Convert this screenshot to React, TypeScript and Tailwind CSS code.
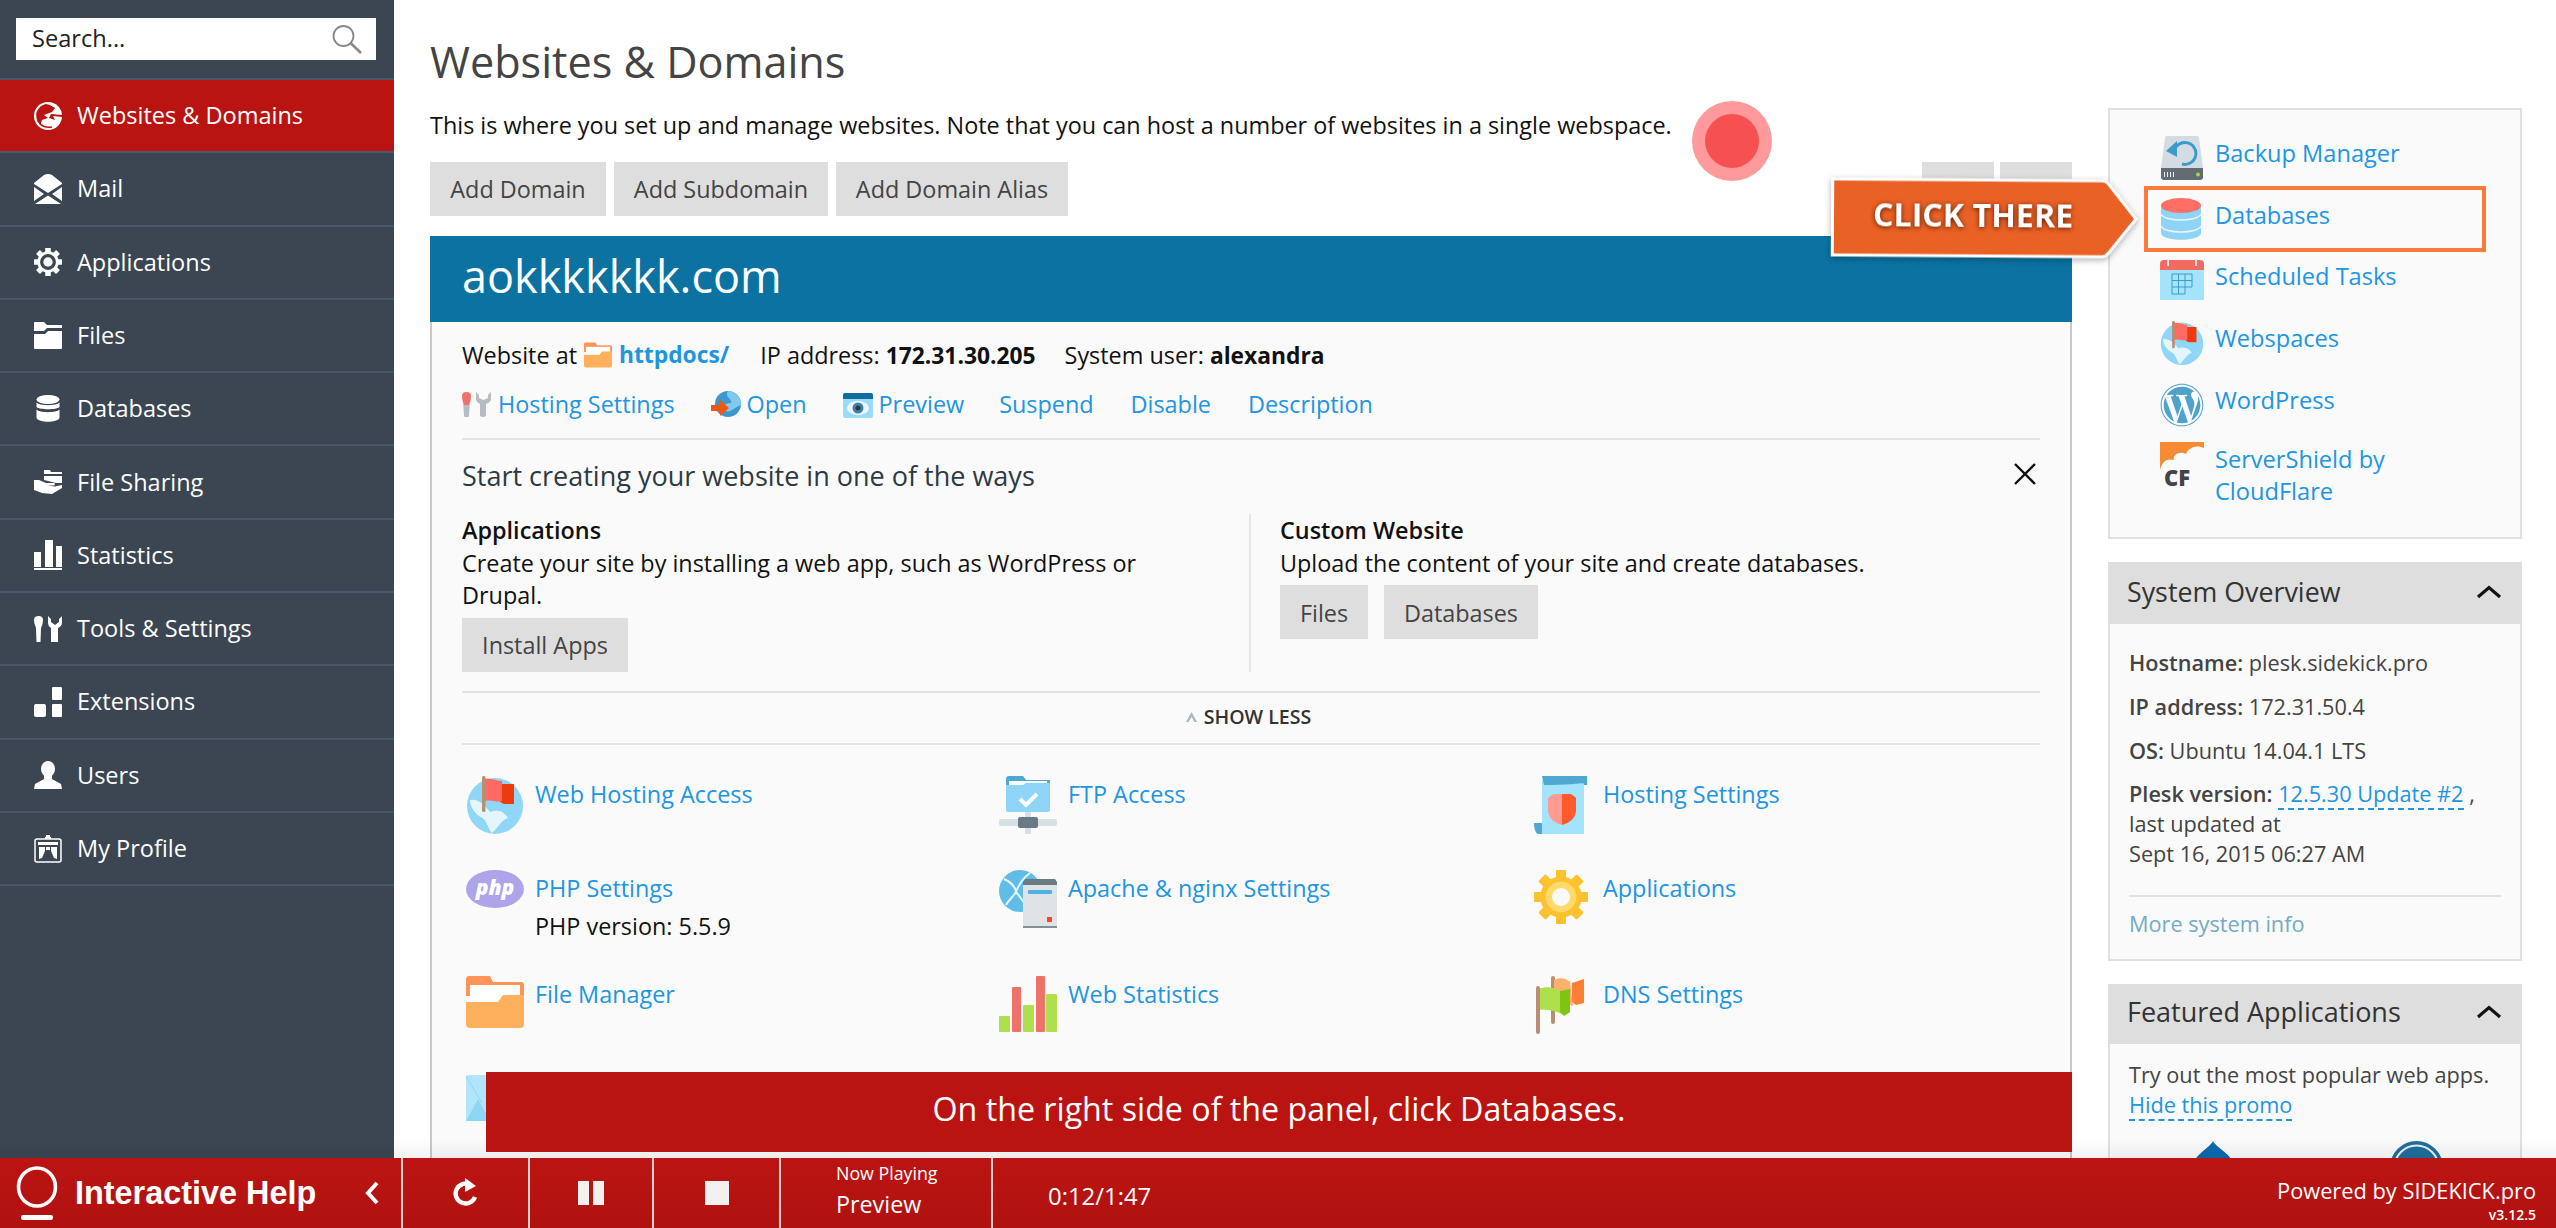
import React from "react";
import { FaWordpress } from "react-icons/fa";

const Gear = ({ size, c, ring, hole, inner }: { size: number; c: string; ring: string; hole: string; inner?: number }) => (
  <svg width={size} height={size} viewBox="0 0 60 60" className="block shrink-0">
    {[0, 45, 90, 135, 180, 225, 270, 315].map((a) => (
      <rect key={a} x="24.5" y="0" width="11" height="60" fill={c} rx="1" transform={`rotate(${a} 30 30)`} />
    ))}
    <circle cx="30" cy="30" r="23" fill={c} />
    <circle cx="30" cy="30" r={inner ?? 17} fill={ring} />
    <circle cx="30" cy="30" r="10" fill={hole} />
  </svg>
);

const NavIcons: Record<string, React.ReactNode> = {
  globe: (
    <svg width="28" height="28" viewBox="0 0 28 28" className="block">
      <circle cx="14" cy="14" r="14" fill="#fff" />
      <path d="M12 2 C7 3 3 7 2.2 12 C2 17 3.5 21 6 24 L8 18 L14 16 L10 13 L18 10 L21 6 L16 3Z" fill="#b91412" />
      <path d="M4 20 C7 25 13 27 19 25 L20 27 L10 27 L4 23Z" fill="#fff" />
      <path d="M5 19 C6 24 12 26 18 25" stroke="#b91412" strokeWidth="1.6" fill="none" />
      <path d="M17 12 L28 13 L28 15 L19 14 L21 18 L15 16Z" fill="#b91412" />
    </svg>
  ),
  mail: (
    <svg width="28" height="30" viewBox="0 0 28 30" className="block" fill="#fff">
      <path d="M10 1 Q14 -1 18 1 L28 9 V10 L14 19 L0 10 V9Z" />
      <path d="M0 13 L10 20 L0 27Z M28 13 L18 20 L28 27Z M1 30 L14 21.5 L27 30Z" />
    </svg>
  ),
  gear: <Gear size={28} c="#fff" ring="#3b4652" hole="#fff" />,
  folder: (
    <svg width="28" height="27" viewBox="0 0 28 27" className="block" fill="#fff">
      <path d="M0 1 Q0 0 1 0 H10 L13 3 H28 V6 H13 L10 9 H0Z" />
      <path d="M0 12 H11 L14 9 H28 V26 Q28 27 27 27 H1 Q0 27 0 26Z" />
    </svg>
  ),
  db: (
    <svg width="28" height="27" viewBox="0 0 28 27" className="block" fill="#fff">
      <ellipse cx="14" cy="4.5" rx="11.5" ry="4.5" />
      <path d="M2.5 7.5 C5 11 23 11 25.5 7.5 V12 C23 15 5 15 2.5 12Z" />
      <path d="M2.5 14.5 C5 18 23 18 25.5 14.5 V23 C23 28 5 28 2.5 23Z" />
    </svg>
  ),
  share: (
    <svg width="28" height="24" viewBox="0 0 28 24" className="block" fill="#fff">
      <path d="M10 0 H16 L17 2 H28 V4 H10Z" />
      <path d="M10 6 H28 V13 H22 L10 10Z" />
      <path d="M0 10 H5 L12 13 H20 Q22 14 20 15.5 H13 L21 16.5 L28 15 V18 L18 24 L8 23 L0 20Z" />
    </svg>
  ),
  stats: (
    <svg width="28" height="30" viewBox="0 0 28 30" className="block" fill="#fff">
      <rect x="0" y="12" width="7" height="15" />
      <rect x="11" y="0" width="8" height="27" />
      <rect x="22" y="6" width="6" height="21" />
      <rect x="0" y="28" width="28" height="2" />
    </svg>
  ),
  tools: (
    <svg width="28" height="26" viewBox="0 0 28 26" className="block" fill="#fff">
      <path d="M0 4 Q0 0 4.5 0 Q9 0 9 4 Q9 8 7 12 L6.5 26 H2.5 L2 12 Q0 8 0 4Z" />
      <path d="M14 0 V7 Q14 10 17 12 V26 H24 V12 Q28 10 28 7 V0 L25 3 V6 L21 9 L17 6 V3Z" />
    </svg>
  ),
  ext: (
    <svg width="28" height="30" viewBox="0 0 28 30" className="block" fill="#fff">
      <rect x="18" y="0" width="10" height="13" rx="1" />
      <rect x="0" y="17" width="12" height="13" rx="2" />
      <rect x="18" y="17" width="10" height="13" rx="1" />
    </svg>
  ),
  user: (
    <svg width="28" height="28" viewBox="0 0 28 28" className="block" fill="#fff">
      <ellipse cx="14" cy="8" rx="7" ry="8" />
      <path d="M10 14 H18 V18 L27 23 L28 28 H0 L1 23 L10 18Z" />
    </svg>
  ),
  profile: (
    <svg width="28" height="28" viewBox="0 0 28 28" className="block">
      <rect x="1" y="4" width="26" height="23" rx="2" stroke="#fff" strokeWidth="1.5" fill="none" />
      <path d="M11 2 H12 V0 H16 V2 H17 V4 H11Z M4 7 H24 V10 H4Z" fill="#fff" />
      <path d="M5 24 V12 H11 V16 L8 23 Z M23 24 V12 H17 V16 L20 23Z M12 12 H16 V15 H12Z" fill="#fff" />
    </svg>
  ),
};

const Backup = () => (
  <svg width="44" height="44" viewBox="0 0 44 44" className="block">
    <path d="M5 2 Q5 0 7 0 H37 Q39 0 39 2 L43 32 H1Z" fill="#d3dce2" />
    <path d="M1 32 H43 V41 Q43 44 40 44 H4 Q1 44 1 41Z" fill="#626c72" />
    <path d="M4 36 h1v5h-1z M7 36 h1v5h-1z M10 36 h1v5h-1z M13 36 h1v5h-1z" fill="#e8eef1" />
    <circle cx="38" cy="38.5" r="2" fill="#a5d64a" />
    <path d="M16 11 A11 11 0 1 1 22 28" stroke="#3b9ccb" strokeWidth="3" fill="none" />
    <path d="M6 15 L17 5 L17 21Z" fill="#3b9ccb" />
  </svg>
);
const Database = () => (
  <svg width="42" height="42" viewBox="0 0 42 42" className="block">
    <path d="M1 7 H41 V35 C41 44 1 44 1 35Z" fill="#8fd4f6" />
    <path d="M1 16 C4 24 38 24 41 16 M1 28 C4 36 38 36 41 28" stroke="#e8f7fe" strokeWidth="1.4" fill="none" />
    <ellipse cx="21" cy="7.5" rx="20" ry="7.5" fill="#ff6f66" />
  </svg>
);
const Calendar = () => (
  <svg width="44" height="41" viewBox="0 0 44 41" className="block">
    <rect x="0" y="7" width="44" height="34" fill="#a4e3fc" />
    <path d="M0 5 Q0 1 4 1 H40 Q44 1 44 5 V11 H0Z" fill="#f26a60" />
    <rect x="7" y="0" width="2" height="7" fill="#e8e8e8" />
    <rect x="35" y="0" width="2" height="7" fill="#e8e8e8" />
    <path d="M12 15 H32 V28 H25 V35 H12Z M12 21.5 H32 M12 28 H25 M18.5 15 V35 M25 15 V28" stroke="#3f9ccb" strokeWidth="1" fill="none" />
  </svg>
);
const GlobeFlag = ({ w, h }: { w: number; h: number }) => (
  <svg width={w} height={h} viewBox="0 0 58 58" className="block">
    <circle cx="29" cy="30" r="28" fill="#8fd6f7" />
    <path d="M4 24 C12 22 20 30 24 36 C33 33 38 36 42 42 C35 44 32 52 26 57 C20 50 22 44 13 40 C8 36 4 30 4 24Z" fill="#e4f5fe" />
    <path d="M34 8 H48 V28 H38 L34 26Z" fill="#ee3a0c" />
    <path d="M16 3 C24 1 30 5 36 5 V25 C30 27 24 22 16 26Z" fill="#ff6b61" />
    <rect x="16" y="0" width="3.5" height="36" rx="1.5" fill="#b98f72" />
  </svg>
);
const CF = () => (
  <svg width="44" height="50" viewBox="0 0 44 50" className="block">
    <path d="M0 0 H44 V6 C36 2 28 6 26 12 C18 8 12 14 14 18 C6 16 2 20 0 28Z" fill="#f68b34" />
    <text x="4" y="44" fontFamily="'Open Sans',sans-serif" fontWeight="800" fontSize="22" fill="#444">CF</text>
  </svg>
);
const OrangeFolder = ({ w, h }: { w: number; h: number }) => (
  <svg width={w} height={h} viewBox="0 0 58 52" className="block">
    <path d="M0 3 Q0 0 3 0 H24 L27 6 H55 Q58 6 58 9 V20 H0Z" fill="#ff9457" />
    <path d="M4 9 H54 V24 H4Z" fill="#fff" />
    <path d="M0 26 H32 L37 19 H55 Q58 19 58 22 V48 Q58 52 54 52 H4 Q0 52 0 48Z" fill="#ffb05c" />
  </svg>
);
const Php = () => (
  <svg width="58" height="38" viewBox="0 0 58 38" className="block">
    <ellipse cx="29" cy="19" rx="29" ry="19" fill="#ada4ea" />
    <text x="29" y="25" textAnchor="middle" fontFamily="'Open Sans',sans-serif" fontWeight="800" fontStyle="italic" fontSize="21" fill="#fff">php</text>
  </svg>
);
const Ftp = () => (
  <svg width="58" height="58" viewBox="0 0 58 58" className="block">
    <rect x="26" y="36" width="6" height="22" rx="1" fill="#d6dfe4" />
    <rect x="0" y="43" width="58" height="7" rx="2" fill="#d6dfe4" />
    <rect x="19" y="41" width="20" height="11" rx="2" fill="#6a7a84" />
    <path d="M7 3 Q7 0 10 0 H24 L27 4 H51 V12 H7Z" fill="#4fa8d2" />
    <rect x="10" y="5" width="38" height="5" fill="#fff" />
    <path d="M7 9 H24 L27 7 H51 V34 Q51 36 49 36 H9 Q7 36 7 34Z" fill="#8ed4f6" />
    <path d="M21 23 L27 29 L38 18" stroke="#fff" strokeWidth="4" fill="none" />
  </svg>
);
const Apache = () => (
  <svg width="58" height="58" viewBox="0 0 58 58" className="block">
    <circle cx="21" cy="21" r="21" fill="#5fbde8" />
    <path d="M5 9 C12 12 16 16 17 22 C14 27 9 31 7 35 M17 22 C20 14 24 8 31 3 M17 22 C22 28 26 34 30 40" stroke="#e6f6fd" strokeWidth="2" fill="none" />
    <path d="M24 12 L26 9 H56 L58 12 V16 H24Z" fill="#6a7a84" />
    <rect x="24" y="15" width="34" height="41" fill="#dfe3e6" />
    <rect x="24" y="56" width="34" height="2" fill="#848f96" />
    <rect x="29" y="20" width="24" height="4" rx="1" fill="#4fb2e3" />
    <rect x="48" y="47" width="5" height="5" fill="#f6472a" />
  </svg>
);
const Scroll = () => (
  <svg width="53" height="58" viewBox="0 0 53 58" className="block">
    <rect x="8" y="4" width="42" height="54" fill="#a3e3fc" />
    <path d="M8 0 H53 V9 H50 C50 5 48 9 10 9Z" fill="#4fa8d2" />
    <path d="M0 47 H8 V58 H4 Q0 56 0 47Z" fill="#4fa8d2" />
    <path d="M28 18 H20 Q16 20 14 22 V36 Q16 46 28 49Z" fill="#ff9b90" />
    <path d="M28 18 H37 Q40 20 42 22 V36 Q40 46 28 49Z" fill="#ff5a2b" />
  </svg>
);
const Chart = () => (
  <svg width="58" height="56" viewBox="0 0 58 56" className="block">
    <rect x="0" y="40" width="11" height="16" rx="1" fill="#aee04e" />
    <rect x="13" y="11" width="9" height="45" rx="1" fill="#ef7268" />
    <rect x="24" y="29" width="11" height="27" rx="1" fill="#aee04e" />
    <rect x="37" y="0" width="9" height="56" rx="1" fill="#ef7268" />
    <rect x="47" y="18" width="11" height="38" rx="1" fill="#aee04e" />
  </svg>
);
const Flags = () => (
  <svg width="52" height="58" viewBox="0 0 52 58" className="block">
    <rect x="17" y="0" width="4" height="48" rx="2" fill="#b98f72" />
    <path d="M20 4 C26 1 32 2 36 6 L39 30 C34 28 26 26 20 26Z" fill="#ffb06a" />
    <path d="M38 7 L50 3 V27 L42 29 L38 26Z" fill="#ff7e36" />
    <path d="M4 13 C12 10 20 11 26 15 L28 38 C20 34 12 33 4 34Z" fill="#aee04e" />
    <path d="M26 15 L36 13 V36 L30 40 L26 36Z" fill="#7dc414" />
    <rect x="2" y="10" width="4" height="48" rx="2" fill="#b98f72" />
  </svg>
);
const MailColor = () => (
  <svg width="58" height="46" viewBox="0 0 58 46" className="block">
    <rect width="58" height="46" rx="2" fill="#b0e5fb" />
    <path d="M0 46 L12 24 L24 46Z" fill="#8fd6f6" />
    <path d="M0 1 L16 28" stroke="#8fd6f6" strokeWidth="1" />
  </svg>
);
const Wrench = () => (
  <svg width="30" height="26" viewBox="0 0 30 26" className="block">
    <path d="M0 4 Q0 0 4.5 0 Q9 0 9 4 Q9 8 7.5 12 L7 24 Q4.5 26 2 24 L1.5 12 Q0 8 0 4Z" fill="#f0726a" />
    <path d="M2 13 H7 L7 24 Q4.5 26 2 24Z" fill="#b5bcc2" />
    <path d="M14 0 V7 Q14 10 18 12 V24 Q21 26 24 24 V12 Q29 10 29 7 V0 L26 3 V6 L21.5 8 L17 6 V3Z" fill="#b5bcc2" />
  </svg>
);
const OpenGlobe = () => (
  <svg width="30" height="28" viewBox="0 0 30 28" className="block">
    <circle cx="17" cy="13" r="13" fill="#3d96cc" />
    <path d="M17 0 C13 6 22 8 20 12 C15 12 10 14 14 20 C20 22 24 16 30 14 C30 6 24 0 17 0Z" fill="#7fc8ee" />
    <path d="M0 14 H9 V9 L18 17 L9 25 V20 H0Z" fill="#f2570f" />
  </svg>
);
const PreviewIcon = () => (
  <svg width="30" height="25" viewBox="0 0 30 25" className="block">
    <rect width="30" height="25" rx="2" fill="#9adcf8" />
    <path d="M0 2 Q0 0 2 0 H28 Q30 0 30 2 V6 H0Z" fill="#0f6d9f" />
    <ellipse cx="15" cy="15" rx="11" ry="7" fill="#e9f7fd" />
    <circle cx="15" cy="15" r="5.5" fill="#4a7f9e" />
    <circle cx="15" cy="15" r="2.5" fill="#1c3f55" />
  </svg>
);

const Chevron = () => (
  <svg width="26" height="14" viewBox="0 0 26 14" className="block">
    <path d="M2 12 L13 2.5 L24 12" stroke="#111" strokeWidth="3.2" fill="none" />
  </svg>
);

const nav: [string, string, boolean?][] = [
  ["Websites & Domains", "globe", true],
  ["Mail", "mail"],
  ["Applications", "gear"],
  ["Files", "folder"],
  ["Databases", "db"],
  ["File Sharing", "share"],
  ["Statistics", "stats"],
  ["Tools & Settings", "tools"],
  ["Extensions", "ext"],
  ["Users", "user"],
  ["My Profile", "profile"],
];

const Btn = ({ children, className = "" }: { children?: React.ReactNode; className?: string }) => (
  <div className={`flex h-[54px] items-center justify-center bg-[#dedede] pt-[2px] text-[23.4px] text-[#444] ${className}`}>{children}</div>
);

const Link = ({ children, className = "" }: { children: React.ReactNode; className?: string }) => (
  <a className={`text-[#2095e2] ${className}`}>{children}</a>
);

const Tool = ({ icon, label, sub, h }: { icon: React.ReactNode; label: string; sub?: string; h: number }) => (
  <div className="flex items-start" style={{ height: h }}>
    <div className="w-[73px] shrink-0 pl-1">{icon}</div>
    <div className="pt-[3px] leading-[30px]">
      <Link className="block text-[23.4px]">{label}</Link>
      {sub && <div className="mt-[8px] text-[23.4px] text-[#111]">{sub}</div>}
    </div>
  </div>
);

const Side = ({ icon, children, h }: { icon: React.ReactNode; children: React.ReactNode; h: string }) => (
  <div className={`flex items-start ${h}`}>
    <div className="w-[55px] shrink-0 pt-[2px]">{icon}</div>
    <div className="pt-[3px] text-[23.6px] leading-[32px] text-[#2095e2]">{children}</div>
  </div>
);

export default function App() {
  return (
    <div className="relative flex h-[1228px] w-[2556px] flex-col overflow-hidden bg-white font-['Open_Sans',sans-serif] text-[23.4px] text-[#111]">
      <div className="flex min-h-0 flex-1">
        <aside className="w-[394px] shrink-0 bg-[#3b4652] text-white">
          <div className="h-[78px] pl-4 pr-[18px] pt-[18px]">
            <div className="flex h-[42px] items-center justify-between bg-white pl-[16px] pr-[14px] text-[23.6px] text-[#222]">
              <span>Search...</span>
              <svg width="30" height="29" viewBox="0 0 30 29" className="block">
                <circle cx="11.5" cy="11" r="10" stroke="#888" strokeWidth="1.8" fill="none" />
                <path d="M18.5 18 L29 28" stroke="#888" strokeWidth="2.6" />
              </svg>
            </div>
          </div>
          <div className="border-t-2 border-[#46586a]">
            {nav.map(([label, ic, active]) => (
              <div key={label} className={`flex h-[73.3px] items-center border-b-2 border-[#46586a] pl-[34px] text-[23.5px] ${active ? "bg-[#b91412]" : ""}`}>
                <div className="w-[43px] shrink-0">{NavIcons[ic]}</div>
                <span>{label}</span>
              </div>
            ))}
          </div>
        </aside>

        <main className="ml-9 w-[1642px] shrink-0">
          <h1 className="mt-9 h-[52px] text-[43.2px] font-normal leading-[52px] text-[#444]">Websites &amp; Domains</h1>
          <p className="mt-[22px] h-[30px] leading-[30px]">This is where you set up and manage websites. Note that you can host a number of websites in a single webspace.</p>
          <div className="mt-[22px] flex justify-between">
            <div className="flex gap-2">
              <Btn className="w-[176px]">Add Domain</Btn>
              <Btn className="w-[214px]">Add Subdomain</Btn>
              <Btn className="w-[232px]">Add Domain Alias</Btn>
            </div>
            <div className="flex gap-[6px]">
              <Btn className="w-[72px]" />
              <Btn className="w-[72px]" />
            </div>
          </div>
          <div className="mt-5 flex h-[86px] items-center bg-[#0b72a2] pb-[6px] pl-[32px] text-[45px] text-white">aokkkkkkk.com</div>
          <section className="h-[900px] border-x-2 border-[#c8c8c8] bg-[#fafafa] px-[30px] pt-[18px]">
            <div className="flex h-[30px] items-center leading-[30px]">
              <span>Website at</span>
              <span className="mx-[7px]"><OrangeFolder w={28} h={26} /></span>
              <Link className="font-bold text-[22.8px]">httpdocs/</Link>
              <span className="ml-[31px]">IP address: <b className="text-[22.8px]">172.31.30.205</b></span>
              <span className="ml-[29px]">System user: <b className="text-[22.8px]">alexandra</b></span>
            </div>
            <div className="mt-5 flex h-[30px] items-center text-[23.4px]">
              <Wrench />
              <Link className="ml-[6px]">Hosting Settings</Link>
              <span className="ml-[36px]"><OpenGlobe /></span>
              <Link className="ml-[6px]">Open</Link>
              <span className="ml-[36px]"><PreviewIcon /></span>
              <Link className="ml-[6px]">Preview</Link>
              <Link className="ml-[35px]">Suspend</Link>
              <Link className="ml-[37px]">Disable</Link>
              <Link className="ml-[37px]">Description</Link>
            </div>
            <div className="mt-[18px] h-[2px] bg-[#e3e3e3]" />
            <div className="mt-[18px] flex h-9 items-center justify-between text-[27px] text-[#2d3a44]">
              <span>Start creating your website in one of the ways</span>
              <svg width="22" height="22" viewBox="0 0 22 22" className="mb-[4px] mr-[4px] block">
                <path d="M1 1 L21 21 M21 1 L1 21" stroke="#111" strokeWidth="2.4" />
              </svg>
            </div>
            <div className="mt-5 flex h-[158px]">
              <div className="w-[787px] shrink-0 pr-[30px] leading-[32.5px]">
                <div className="font-semibold">Applications</div>
                <div>Create your site by installing a web app, such as WordPress or Drupal.</div>
                <Btn className="mt-[6px] w-[166px]">Install Apps</Btn>
              </div>
              <div className="flex-1 border-l-2 border-[#e6e6e6] pl-[29px] leading-[32.5px]">
                <div className="font-semibold">Custom Website</div>
                <div>Upload the content of your site and create databases.</div>
                <div className="mt-[6px] flex gap-4">
                  <Btn className="w-[88px]">Files</Btn>
                  <Btn className="w-[154px]">Databases</Btn>
                </div>
              </div>
            </div>
            <div className="mt-[19px] flex h-[54px] items-center justify-center border-y-2 border-[#e3e3e3] pb-[2px] pr-[6px] text-[19.6px] font-semibold text-[#333]">
              <svg width="13" height="12" viewBox="0 0 13 12" className="mr-[6px] block">
                <path d="M6.5 1 L12 11 H9.5 L6.5 6 L3.5 11 H1Z" fill="#a9b7c2" />
              </svg>
              SHOW LESS
            </div>
            <div className="grid grid-cols-[533px_535px_1fr] pt-[31px]">
              <Tool h={94} icon={<GlobeFlag w={58} h={58} />} label="Web Hosting Access" />
              <Tool h={94} icon={<Ftp />} label="FTP Access" />
              <Tool h={94} icon={<Scroll />} label="Hosting Settings" />
              <Tool h={106} icon={<Php />} label="PHP Settings" sub="PHP version: 5.5.9" />
              <Tool h={106} icon={<Apache />} label="Apache & nginx Settings" />
              <Tool h={106} icon={<Gear size={54} c="#fec22e" ring="#ffda6b" hole="#fafafa" />} label="Applications" />
              <Tool h={99} icon={<OrangeFolder w={58} h={52} />} label="File Manager" />
              <Tool h={99} icon={<Chart />} label="Web Statistics" />
              <Tool h={99} icon={<Flags />} label="DNS Settings" />
              <Tool h={89} icon={<MailColor />} label="" />
            </div>
          </section>
        </main>

        <aside className="ml-9 w-[414px] shrink-0 pt-[108px] text-[21.7px] text-[#444]">
          <div className="h-[431px] border-2 border-[#e0e0e0] bg-[#fafafa] pl-[50px] pt-[24px]">
            <Side h="h-[62px]" icon={<Backup />}>Backup Manager</Side>
            <Side h="h-[61px]" icon={<Database />}>Databases</Side>
            <Side h="h-[62px]" icon={<Calendar />}>Scheduled Tasks</Side>
            <Side h="h-[62px]" icon={<GlobeFlag w={44} h={44} />}>Webspaces</Side>
            <Side h="h-[59px]" icon={<FaWordpress size={44} color="#4fa2cc" className="block" />}>WordPress</Side>
            <Side h="h-[70px]" icon={<CF />}>ServerShield by<br />CloudFlare</Side>
          </div>

          <div className="mt-[23px] flex h-[62px] items-center justify-between bg-[#dedede] pb-[2px] pl-[19px] pr-5 text-[26.8px] text-[#333]">
            <span>System Overview</span>
            <Chevron />
          </div>
          <div className="h-[337px] border-x-2 border-b-2 border-[#e0e0e0] bg-[#fafafa] px-[19px] pt-[24px] leading-[30px]">
            <div><b className="font-semibold">Hostname:</b> plesk.sidekick.pro</div>
            <div className="mt-[14px]"><b className="font-semibold">IP address:</b> 172.31.50.4</div>
            <div className="mt-[14px]"><b className="font-semibold">OS:</b> Ubuntu 14.04.1 LTS</div>
            <div className="mt-[13px]">
              <b className="font-semibold">Plesk version:</b>{" "}
              <span className="border-b-2 border-dashed border-[#2095e2] text-[#2095e2]">12.5.30 Update #2</span> ,
              <br />last updated at<br />Sept 16, 2015 06:27 AM
            </div>
            <div className="mt-[26px] h-[2px] bg-[#e0e0e0]" />
            <div className="mt-3 text-[#74abc7]">More system info</div>
          </div>

          <div className="mt-[23px] flex h-[60px] items-center justify-between bg-[#dedede] pb-1 pl-[19px] pr-5 text-[27px] text-[#333]">
            <span>Featured Applications</span>
            <Chevron />
          </div>
          <div className="h-[200px] border-x-2 border-[#e0e0e0] bg-[#fafafa] px-[19px] pt-[16px] leading-[30px]">
            <div>Try out the most popular web apps.</div>
            <span className="border-b-2 border-dashed border-[#2095e2] text-[#2095e2]">Hide this promo</span>
            <div className="mt-[21px] flex pl-[64px]">
              <svg width="41" height="40" viewBox="0 0 41 40" className="block">
                <path d="M20 0 C22 6 41 14 41 26 C41 34 32 40 20 40 C8 40 0 34 0 26 C0 14 18 6 20 0Z" fill="#0a6ab0" />
              </svg>
              <svg width="53" height="53" viewBox="0 0 53 53" className="ml-[156px] block">
                <circle cx="26.5" cy="26.5" r="26.5" fill="#1e6e9c" />
                <circle cx="26.5" cy="26.5" r="22" fill="none" stroke="#e8f0f5" strokeWidth="2" />
              </svg>
            </div>
          </div>
        </aside>
      </div>

      <footer className="relative flex h-[70px] shrink-0 items-stretch bg-linear-to-b from-[#bb1412] to-[#b01210] text-white">
        <div className="absolute -top-5 left-0 h-5 w-full bg-linear-to-t from-black/5 to-transparent" />
        <div className="flex w-[403px] shrink-0 items-center border-r-2 border-white/80 pl-[16px]">
          <svg width="42" height="54" viewBox="0 0 42 54" className="block shrink-0">
            <ellipse cx="21" cy="21" rx="18.5" ry="19" stroke="#fff" strokeWidth="3.6" fill="none" />
            <rect x="5" y="49" width="32" height="5" rx="2" fill="#fff" />
          </svg>
          <span className="ml-[17px] font-['Liberation_Sans',sans-serif] text-[32.4px] font-bold">Interactive Help</span>
          <svg width="16" height="24" viewBox="0 0 16 24" className="ml-[48px] block">
            <path d="M13 2 L4 12 L13 22" stroke="#fff" strokeWidth="4" fill="none" />
          </svg>
        </div>
        <div className="flex w-[127px] shrink-0 items-center justify-center border-r-2 border-white/80">
          <svg width="26" height="32" viewBox="0 0 26 32" className="block">
            <path d="M18 8 A10 10 0 1 0 22 20" stroke="#fff" strokeWidth="4.4" fill="none" />
            <path d="M12 1 L23 9 L12 15Z" fill="#fff" />
          </svg>
        </div>
        <div className="flex w-[124px] shrink-0 items-center justify-center gap-[4px] border-r-2 border-white/80">
          <div className="h-6 w-[11px] bg-[#f3f0f0]" />
          <div className="h-6 w-[11px] bg-[#f3f0f0]" />
        </div>
        <div className="flex w-[127px] shrink-0 items-center justify-center border-r-2 border-white/80">
          <div className="h-6 w-6 bg-[#f3f0f0]" />
        </div>
        <div className="flex w-[212px] shrink-0 flex-col border-r-2 border-white/80 pl-[55px]">
          <span className="mt-[4px] text-[17.8px] leading-[22px]">Now Playing</span>
          <span className="mt-[5px] text-[23.3px] leading-[30px]">Preview</span>
        </div>
        <div className="flex items-center pl-[55px] pt-[6px] text-[23.9px]">0:12/1:47</div>
        <div className="ml-auto flex flex-col items-end pr-5 pt-[18px]">
          <span className="text-[21.8px] font-medium leading-[30px]">Powered by SIDEKICK.pro</span>
          <span className="text-[14px] font-semibold leading-[18px]">v3.12.5</span>
        </div>
      </footer>

      <div className="absolute left-[1692px] top-[101px] flex h-20 w-20 items-center justify-center rounded-full bg-[#ff9a9c]">
        <div className="h-[54px] w-[54px] rounded-full bg-[#f65150]" />
      </div>

      <div className="absolute left-[486px] top-[1072px] flex h-20 w-[1586px] items-center justify-center bg-[#b91412] pb-[6px] text-[32.2px] text-white">
        On the right side of the panel, click Databases.
      </div>

      <div className="absolute left-[2144px] top-[186px] h-[66px] w-[342px] border-4 border-[#f97a3a]" />

      <div className="absolute left-[1830px] top-[176px] h-[84px] w-[310px] rotate-[0.4deg] drop-shadow-[0_2px_3px_rgba(0,0,0,0.3)]">
        <svg width="310" height="84" viewBox="0 0 310 84" className="absolute inset-0 block">
          <path d="M2.5 4 H272 Q276 4 279 8 L306 42 L279 76 Q276 80 272 80 H2.5Z" fill="#ea6125" stroke="#fff" strokeWidth="3" />
        </svg>
        <div className="relative flex h-full items-center pb-[5px] pl-[43px] text-[32.2px] font-bold text-white [text-shadow:0_1px_5px_rgba(70,20,0,0.9)]">CLICK THERE</div>
      </div>
    </div>
  );
}
